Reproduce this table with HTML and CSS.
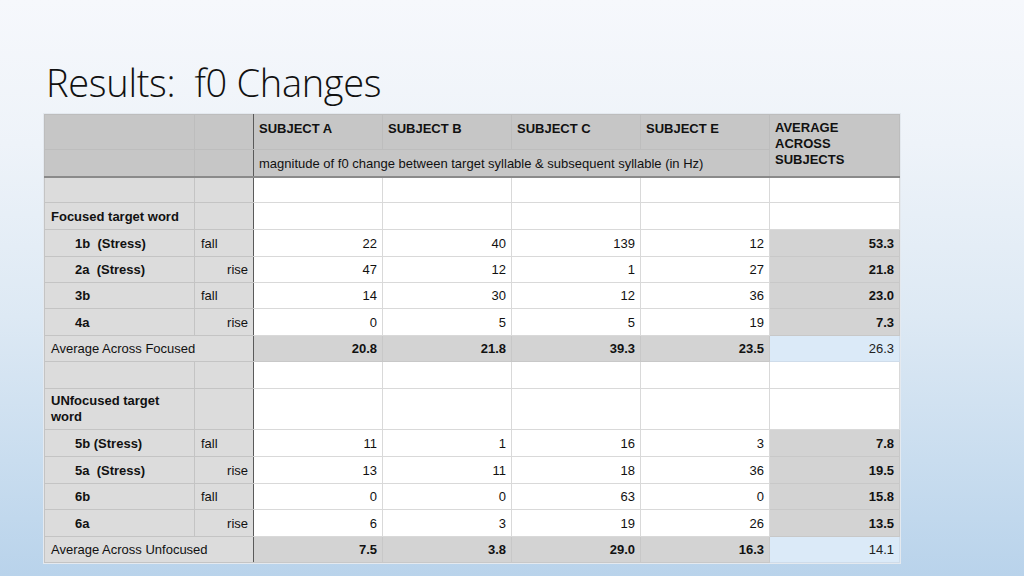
FILE: index.html
```html
<!DOCTYPE html>
<html>
<head>
<meta charset="utf-8">
<link rel="stylesheet" href="styles.css">
</head>
<body>
<div class="slide">
  <h1 class="title">Results:&nbsp; f0 Changes</h1>
  <table class="data">
    <colgroup>
      <col class="c-label"><col class="c-dir"><col class="c-num"><col class="c-num"><col class="c-num"><col class="c-num"><col class="c-avg">
    </colgroup>
    <thead>
      <tr class="h1">
        <th class="hd"></th><th class="hd sep"></th>
        <th class="hd">SUBJECT A</th><th class="hd">SUBJECT B</th><th class="hd">SUBJECT C</th><th class="hd">SUBJECT E</th>
        <th class="hd avghd" rowspan="2">AVERAGE ACROSS SUBJECTS</th>
      </tr>
      <tr class="h2">
        <th class="hd"></th><th class="hd sep"></th>
        <th class="hd note" colspan="4">magnitude of f0 change between target syllable &amp; subsequent syllable (in Hz)</th>
      </tr>
    </thead>
    <tbody>
      <tr class="r26"><td class="lab"></td><td class="lab dir"></td><td></td><td></td><td></td><td></td><td></td></tr>
      <tr class="r27"><td class="lab b">Focused target word</td><td class="lab dir"></td><td></td><td></td><td></td><td></td><td></td></tr>
      <tr class="r27"><td class="lab b ind">1b&nbsp; (Stress)</td><td class="lab dir">fall</td><td class="n">22</td><td class="n">40</td><td class="n">139</td><td class="n">12</td><td class="n g b">53.3</td></tr>
      <tr class="r26"><td class="lab b ind">2a&nbsp; (Stress)</td><td class="lab dir r">rise</td><td class="n">47</td><td class="n">12</td><td class="n">1</td><td class="n">27</td><td class="n g b">21.8</td></tr>
      <tr class="r26"><td class="lab b ind">3b</td><td class="lab dir">fall</td><td class="n">14</td><td class="n">30</td><td class="n">12</td><td class="n">36</td><td class="n g b">23.0</td></tr>
      <tr class="r27"><td class="lab b ind">4a</td><td class="lab dir r">rise</td><td class="n">0</td><td class="n">5</td><td class="n">5</td><td class="n">19</td><td class="n g b">7.3</td></tr>
      <tr class="r26"><td class="lab dir" colspan="2">Average Across Focused</td><td class="n g b">20.8</td><td class="n g b">21.8</td><td class="n g b">39.3</td><td class="n g b">23.5</td><td class="n blue">26.3</td></tr>
      <tr class="r27"><td class="lab"></td><td class="lab dir"></td><td></td><td></td><td></td><td></td><td></td></tr>
      <tr class="r41"><td class="lab b">UNfocused target word</td><td class="lab dir"></td><td></td><td></td><td></td><td></td><td></td></tr>
      <tr class="r27"><td class="lab b ind">5b (Stress)</td><td class="lab dir">fall</td><td class="n">11</td><td class="n">1</td><td class="n">16</td><td class="n">3</td><td class="n g b">7.8</td></tr>
      <tr class="r27"><td class="lab b ind">5a&nbsp; (Stress)</td><td class="lab dir r">rise</td><td class="n">13</td><td class="n">11</td><td class="n">18</td><td class="n">36</td><td class="n g b">19.5</td></tr>
      <tr class="r26"><td class="lab b ind">6b</td><td class="lab dir">fall</td><td class="n">0</td><td class="n">0</td><td class="n">63</td><td class="n">0</td><td class="n g b">15.8</td></tr>
      <tr class="r27"><td class="lab b ind">6a</td><td class="lab dir r">rise</td><td class="n">6</td><td class="n">3</td><td class="n">19</td><td class="n">26</td><td class="n g b">13.5</td></tr>
      <tr class="r26"><td class="lab dir" colspan="2">Average Across Unfocused</td><td class="n g b">7.5</td><td class="n g b">3.8</td><td class="n g b">29.0</td><td class="n g b">16.3</td><td class="n blue">14.1</td></tr>
    </tbody>
  </table>
</div>
</body>
</html>
```

FILE: styles.css
```css
html, body {
  margin: 0;
  padding: 0;
}
body {
  width: 1024px;
  height: 576px;
  overflow: hidden;
  background: linear-gradient(180deg, #f6f8fc 0%, #eef3f9 25%, #dde9f4 55%, #c9ddef 80%, #b9d3eb 100%);
}
.slide {
  padding: 0 0 0 44px;
}
.title {
  margin: 0;
  padding: 60px 0 0 2px;
  height: 54px;
  font-family: "Open Sans", sans-serif;
  font-weight: 300;
  font-size: 38px;
  line-height: 44px;
  color: #111;
  letter-spacing: -0.3px;
}
.data {
  border-collapse: collapse;
  table-layout: fixed;
  width: 855px;
  font-family: "Liberation Sans", Arial, sans-serif;
  font-size: 13px;
  color: #111;
  background: #fff;
  outline: 1px solid #e4e9ef;
}
.c-label { width: 150px; }
.c-dir { width: 59px; }
.c-num { width: 129px; }
.c-avg { width: 130px; }
.data td, .data th {
  padding: 0 5px;
  border: 1px solid #d9d9d9;
  overflow: hidden;
  white-space: nowrap;
}
.data .hd {
  background: #c6c6c6;
  font-weight: bold;
  text-align: left;
  border-color: #bdbdbd;
  vertical-align: middle;
}
.h1 { height: 35px; }
.h1 .hd { vertical-align: top; padding-top: 6px; }
.h2 { height: 27px; }
.data .h2 .hd { border-bottom: 2px solid #8a8a8a; }
.data .note { font-weight: normal; padding-top: 2px; }
.data .avghd {
  white-space: normal;
  line-height: 16px;
  vertical-align: top;
  padding: 5px 40px 0 5px;
  border-bottom: 2px solid #8a8a8a;
}
.data .hd.sep, .data .lab.dir { border-right: 1px solid #5a5a5a; }
.data .lab {
  background: #dcdcdc;
  border-color: #c4c4c4;
  padding-left: 6px;
}
.data .lab.dir { border-right-color: #5a5a5a; }
.data .lab.r { text-align: right; padding-right: 5px; }
.b { font-weight: bold; }
.data .ind { padding-left: 30px; }
.r26 { height: 26px; }
.r27 { height: 27px; }
.r41 { height: 41px; }
.data .r41 .lab { white-space: normal; line-height: 16px; }
.n { text-align: right; }
.data .g { background: #d3d3d3; border-color: #c8c8c8; }
.data .blue { background: #dbeaf8; border-color: #cfdcea; color: #222; }
```
